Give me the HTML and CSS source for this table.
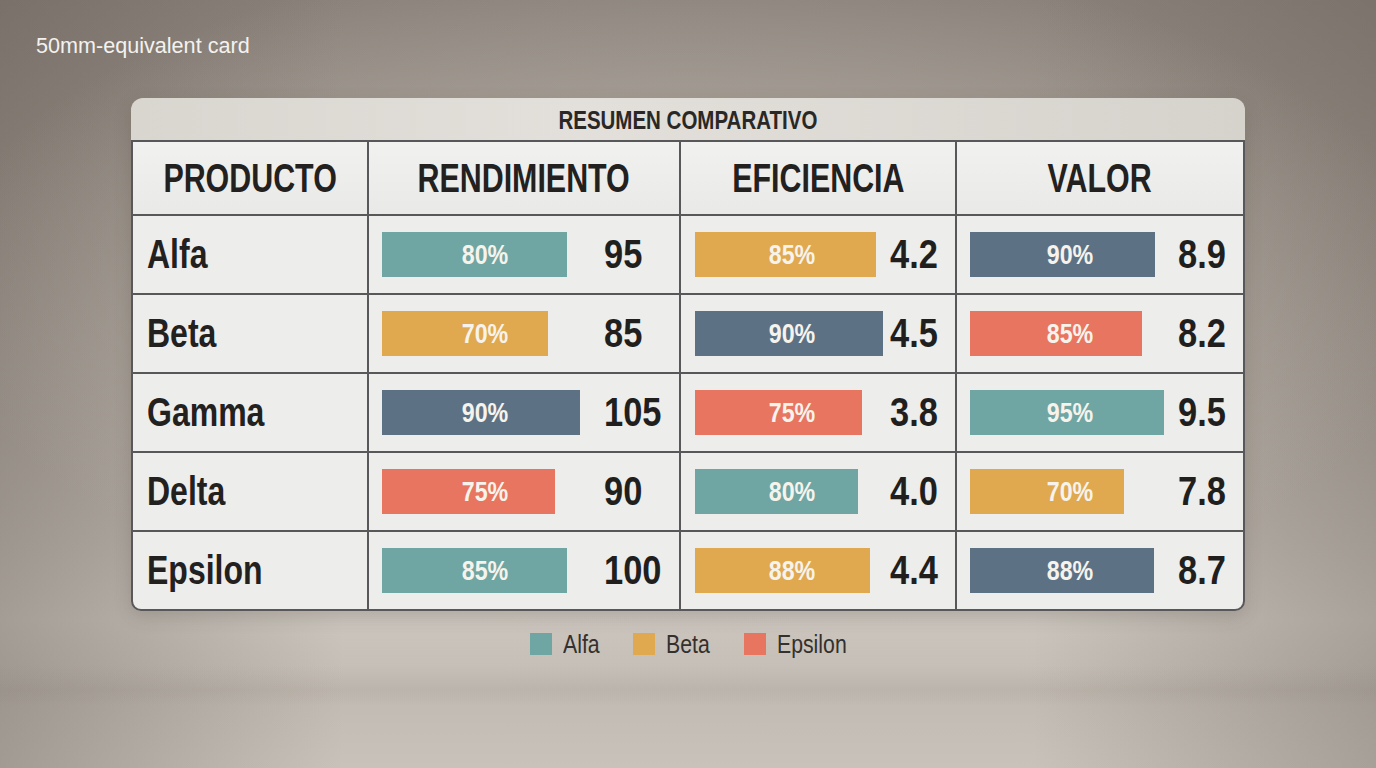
FILE: index.html
```html
<!DOCTYPE html>
<html lang="es">
<head>
<meta charset="utf-8">
<title>Resumen comparativo</title>
<link rel="stylesheet" href="styles.css">
</head>
<body>
<div class="caption">50mm-equivalent card</div>
<div class="card">
  <div class="card-title"><span class="c">RESUMEN COMPARATIVO</span></div>
  <div class="table">
    <div class="th"><span class="c">PRODUCTO</span></div>
    <div class="th"><span class="c">RENDIMIENTO</span></div>
    <div class="th"><span class="c">EFICIENCIA</span></div>
    <div class="th"><span class="c">VALOR</span></div>

    <div class="td name"><span class="c">Alfa</span></div>
    <div class="td metric rend"><div class="wrap"><div class="fill teal" style="width:185px"></div><span class="pct"><span class="c">80%</span></span></div><span class="val">95</span></div>
    <div class="td metric efic"><div class="wrap"><div class="fill mustard" style="width:181px"></div><span class="pct"><span class="c">85%</span></span></div><span class="val">4.2</span></div>
    <div class="td metric valor"><div class="wrap"><div class="fill slate" style="width:185px"></div><span class="pct"><span class="c">90%</span></span></div><span class="val">8.9</span></div>

    <div class="td name"><span class="c">Beta</span></div>
    <div class="td metric rend"><div class="wrap"><div class="fill mustard" style="width:166px"></div><span class="pct"><span class="c">70%</span></span></div><span class="val">85</span></div>
    <div class="td metric efic"><div class="wrap"><div class="fill slate" style="width:188px"></div><span class="pct"><span class="c">90%</span></span></div><span class="val">4.5</span></div>
    <div class="td metric valor"><div class="wrap"><div class="fill coral" style="width:172px"></div><span class="pct"><span class="c">85%</span></span></div><span class="val">8.2</span></div>

    <div class="td name"><span class="c">Gamma</span></div>
    <div class="td metric rend"><div class="wrap"><div class="fill slate" style="width:198px"></div><span class="pct"><span class="c">90%</span></span></div><span class="val">105</span></div>
    <div class="td metric efic"><div class="wrap"><div class="fill coral" style="width:167px"></div><span class="pct"><span class="c">75%</span></span></div><span class="val">3.8</span></div>
    <div class="td metric valor"><div class="wrap"><div class="fill teal" style="width:194px"></div><span class="pct"><span class="c">95%</span></span></div><span class="val">9.5</span></div>

    <div class="td name"><span class="c">Delta</span></div>
    <div class="td metric rend"><div class="wrap"><div class="fill coral" style="width:173px"></div><span class="pct"><span class="c">75%</span></span></div><span class="val">90</span></div>
    <div class="td metric efic"><div class="wrap"><div class="fill teal" style="width:163px"></div><span class="pct"><span class="c">80%</span></span></div><span class="val">4.0</span></div>
    <div class="td metric valor"><div class="wrap"><div class="fill mustard" style="width:154px"></div><span class="pct"><span class="c">70%</span></span></div><span class="val">7.8</span></div>

    <div class="td name"><span class="c">Epsilon</span></div>
    <div class="td metric rend"><div class="wrap"><div class="fill teal" style="width:185px"></div><span class="pct"><span class="c">85%</span></span></div><span class="val">100</span></div>
    <div class="td metric efic"><div class="wrap"><div class="fill mustard" style="width:175px"></div><span class="pct"><span class="c">88%</span></span></div><span class="val">4.4</span></div>
    <div class="td metric valor"><div class="wrap"><div class="fill slate" style="width:184px"></div><span class="pct"><span class="c">88%</span></span></div><span class="val">8.7</span></div>
  </div>
</div>
<div class="legend">
  <div class="legend-item"><span class="swatch teal"></span><span class="lt">Alfa</span></div>
  <div class="legend-item"><span class="swatch mustard"></span><span class="lt">Beta</span></div>
  <div class="legend-item"><span class="swatch coral"></span><span class="lt">Epsilon</span></div>
</div>
</body>
</html>
```

FILE: styles.css
```css
html, body {
  margin: 0;
  padding: 0;
}

body {
  width: 1376px;
  height: 768px;
  overflow: hidden;
  font-family: "Liberation Sans", Arial, sans-serif;
  color: #222;
  background:
    radial-gradient(ellipse 55% 45% at 50% 38%, rgba(196, 189, 181, 0.75), rgba(196, 189, 181, 0) 100%),
    linear-gradient(180deg, rgba(0,0,0,0) 0, rgba(0,0,0,0) 665px, rgba(120,110,100,0.10) 690px, rgba(0,0,0,0) 705px),
    linear-gradient(90deg, rgba(90, 82, 75, 0.35) 0, rgba(0,0,0,0) 25%, rgba(0,0,0,0) 75%, rgba(90, 82, 75, 0.3) 100%),
    linear-gradient(180deg, #8a827a 0, #a0988f 250px, #c0b9b1 540px, #cbc5be 620px, #c2bbb3 700px, #c8c2bb 768px);
}

/* condensed text: Arial-width glyphs narrowed to a condensed face */
.c {
  display: inline-block;
  transform: scaleX(0.8);
}

.caption {
  font-family: "Liberation Sans", Arial, sans-serif;
  font-size: 21.6px;
  line-height: 24px;
  color: #f4f2ef;
  padding: 34px 0 0 36px;
  height: 24px;
}

.card {
  width: 1114px;
  margin: 40px auto 0;
  border-radius: 12px 12px 10px 10px;
  box-shadow: 0 6px 18px rgba(60, 50, 40, 0.18);
}

.card-title {
  height: 42px;
  line-height: 44px;
  text-align: center;
  font-weight: bold;
  font-size: 25px;
  color: #2a2826;
  border-radius: 12px 12px 0 0;
  background: linear-gradient(90deg, #d9d5cf 0, #e3e0db 40%, #d6d2cc 100%);
}

.card-title .c {
  transform: scaleX(0.82);
}

.table {
  display: grid;
  grid-template-columns: 234px 310px 274px 286px;
  grid-template-rows: 72px repeat(5, 77px);
  gap: 2px;
  background: #58585a;
  border: 2px solid #58585a;
  border-radius: 0 0 10px 10px;
  overflow: hidden;
}

.th, .td {
  background: #ededec;
}

.th {
  display: flex;
  align-items: center;
  justify-content: center;
  font-weight: bold;
  font-size: 40px;
  color: #232120;
  background: linear-gradient(180deg, #f1f1f0, #e9e9e8);
}

.th .c {
  transform: scaleX(0.76);
}

.td.name {
  display: flex;
  align-items: center;
  padding-left: 14px;
  font-weight: bold;
  font-size: 40px;
  color: #232120;
}

.td.name .c {
  transform-origin: left center;
}

.metric {
  display: flex;
  align-items: center;
}

.metric.rend { padding-left: 13px; }
.metric.efic { padding-left: 14px; }
.metric.valor { padding-left: 13px; }

.rend .wrap { width: 206px; margin-right: 16px; }
.efic .wrap { width: 194px; margin-right: 1px; }
.valor .wrap { width: 200px; margin-right: 8px; }

.wrap {
  position: relative;
  height: 45px;
  flex-shrink: 0;
}

.fill {
  height: 45px;
}

.pct {
  position: absolute;
  left: 0;
  right: 0;
  top: 0;
  line-height: 46px;
  text-align: center;
  font-weight: bold;
  font-size: 27px;
  color: #f6f3ec;
}

.pct .c {
  transform: scaleX(0.86);
}

.val {
  display: inline-block;
  font-weight: bold;
  font-size: 41px;
  color: #211f1e;
  transform: scaleX(0.84);
  transform-origin: left center;
}

.teal { background: #6fa5a2; }
.mustard { background: #e0a84f; }
.slate { background: #5d7185; }
.coral { background: #e8755f; }

.legend {
  display: flex;
  justify-content: center;
  gap: 37px;
  margin-top: 22px;
  padding-left: 3px;
}

.legend-item {
  display: flex;
  align-items: center;
  gap: 11px;
  font-size: 25px;
  line-height: 22px;
  color: #33302d;
}

.lt {
  display: inline-block;
  transform: scaleX(0.85);
  transform-origin: left center;
  margin-right: -10px;
}

.swatch {
  width: 22px;
  height: 22px;
  display: inline-block;
}
```
